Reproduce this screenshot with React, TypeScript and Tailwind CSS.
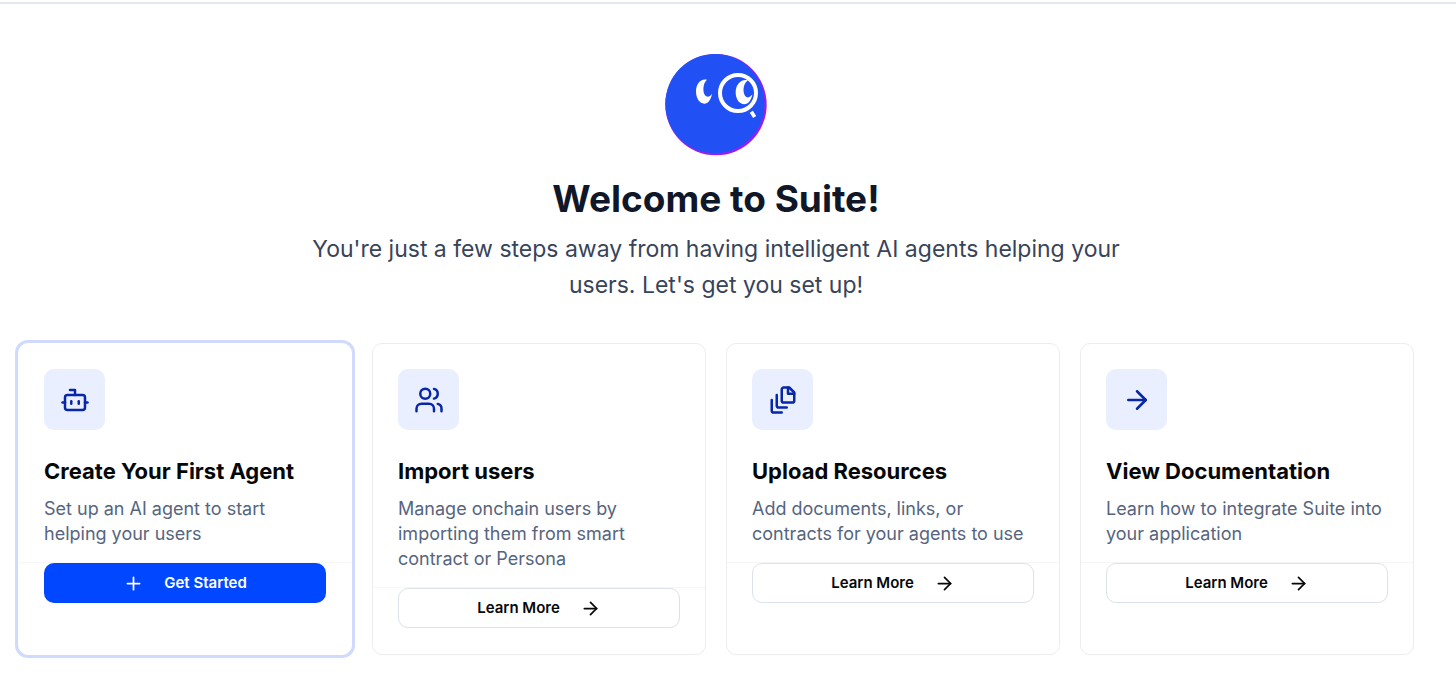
// App.tsx
import React from 'react';
import { ArrowRight, Bot, Plus, Users } from 'lucide-react';

interface SetupCard {
  title: string;
  description: string;
  icon: React.ReactNode;
  primary?: boolean;
}

const FileStackIcon: React.FC = () => (
  <svg
    className="size-[30px]"
    viewBox="0 0 24 24"
    fill="none"
    stroke="currentColor"
    strokeWidth="2"
    strokeLinecap="round"
    strokeLinejoin="round"
    aria-hidden="true"
  >
    <path d="M16 2v5h5" />
    <path d="M21 6v6.5c0 .8-.7 1.5-1.5 1.5h-7c-.8 0-1.5-.7-1.5-1.5v-9c0-.8.7-1.5 1.5-1.5H17l4 4z" />
    <path d="M7 8v8.8c0 .3.2.6.4.8.2.2.5.4.8.4H15" />
    <path d="M3 12v8.8c0 .3.2.6.4.8.2.2.5.4.8.4H11" />
  </svg>
);

const cards: SetupCard[] = [
  {
    title: 'Create Your First Agent',
    description: 'Set up an AI agent to start helping your users',
    icon: <Bot className="size-[30px]" />,
    primary: true,
  },
  {
    title: 'Import users',
    description: 'Manage onchain users by importing them from smart contract or Persona',
    icon: <Users className="size-[30px]" />,
  },
  {
    title: 'Upload Resources',
    description: 'Add documents, links, or contracts for your agents to use',
    icon: <FileStackIcon />,
  },
  {
    title: 'View Documentation',
    description: 'Learn how to integrate Suite into your application',
    icon: <ArrowRight className="size-[30px]" />,
  },
];

const Logo: React.FC = () => (
  <svg className="size-[102px]" viewBox="27 29 306 306" aria-hidden="true">
    <circle cx="180" cy="181" r="152" fill="#9a1cf0" />
    <circle cx="177" cy="178" r="149" fill="#2151f5" />
    <path
      d="M153 106C134 101 120 119 120 141C120 163 131 178 145 178C156 178 165 166 168 148C163 156 157 159 151 156C139 150 139 117 153 106Z"
      fill="#fff"
    />
    <circle cx="246" cy="146" r="54" fill="none" stroke="#fff" strokeWidth="12" />
    <path
      d="M276 108C255 102 239 121 239 144C239 165 250 180 265 180C277 180 286 168 289 150C284 158 277 161 271 158C259 151 259 119 276 108Z"
      fill="#fff"
    />
    <path d="M286 202L296 218" stroke="#fff" strokeWidth="11" />
  </svg>
);

const Card: React.FC<{ card: SetupCard }> = ({ card }) => {
  return (
    <div
      className={
        card.primary
          ? 'rounded-[10px] border border-white bg-white ring-3 ring-[#cfdafc]'
          : 'rounded-[10px] border border-[#ebedf0] bg-white'
      }
    >
      <div className="px-[25px] pt-[25px] pb-4">
        <div className="flex size-[61px] items-center justify-center rounded-[10px] bg-[#e9effe] text-[#0826a8]">
          {card.icon}
        </div>
        <h2 className="mt-[27px] text-[22px] leading-7 font-bold text-[#060709]">{card.title}</h2>
        <p className="mt-[11px] text-lg leading-[25px] text-[#56657f]">{card.description}</p>
      </div>
      <div className="border-t border-[#f5f6f8] px-[25px] pb-[26px]">
        {card.primary ? (
          <button className="flex h-10 w-full items-center justify-center gap-5 rounded-[10px] bg-[#0047ff] text-[15px] font-semibold text-white">
            <Plus className="size-[21px]" />
            Get Started
          </button>
        ) : (
          <button className="flex h-10 w-full items-center justify-center gap-5 rounded-[10px] border border-[#dce2ea] bg-white text-[15px] font-semibold text-[#060709]">
            Learn More
            <ArrowRight className="size-[21px]" />
          </button>
        )}
      </div>
    </div>
  );
};

const App: React.FC = () => {
  return (
    <div className="bg-white pt-0.5 font-['Inter',sans-serif]">
      <main className="border-t-2 border-[#e4e7f2] pt-[50px] pr-[42px] pb-8 pl-[18px]">
        <header className="flex flex-col items-center text-center">
          <Logo />
          <h1 className="mt-[21px] text-[37px] leading-[44px] font-bold text-[#0f1729]">Welcome to Suite!</h1>
          <p className="mt-2.5 max-w-[840px] text-[23px] leading-9 text-[#38445a]">
            You're just a few steps away from having intelligent AI agents helping your users. Let's get you set up!
          </p>
        </header>
        <section className="mt-10 grid grid-cols-4 gap-5">
          {cards.map((card) => (
            <Card key={card.title} card={card} />
          ))}
        </section>
      </main>
    </div>
  );
};

export default App;
